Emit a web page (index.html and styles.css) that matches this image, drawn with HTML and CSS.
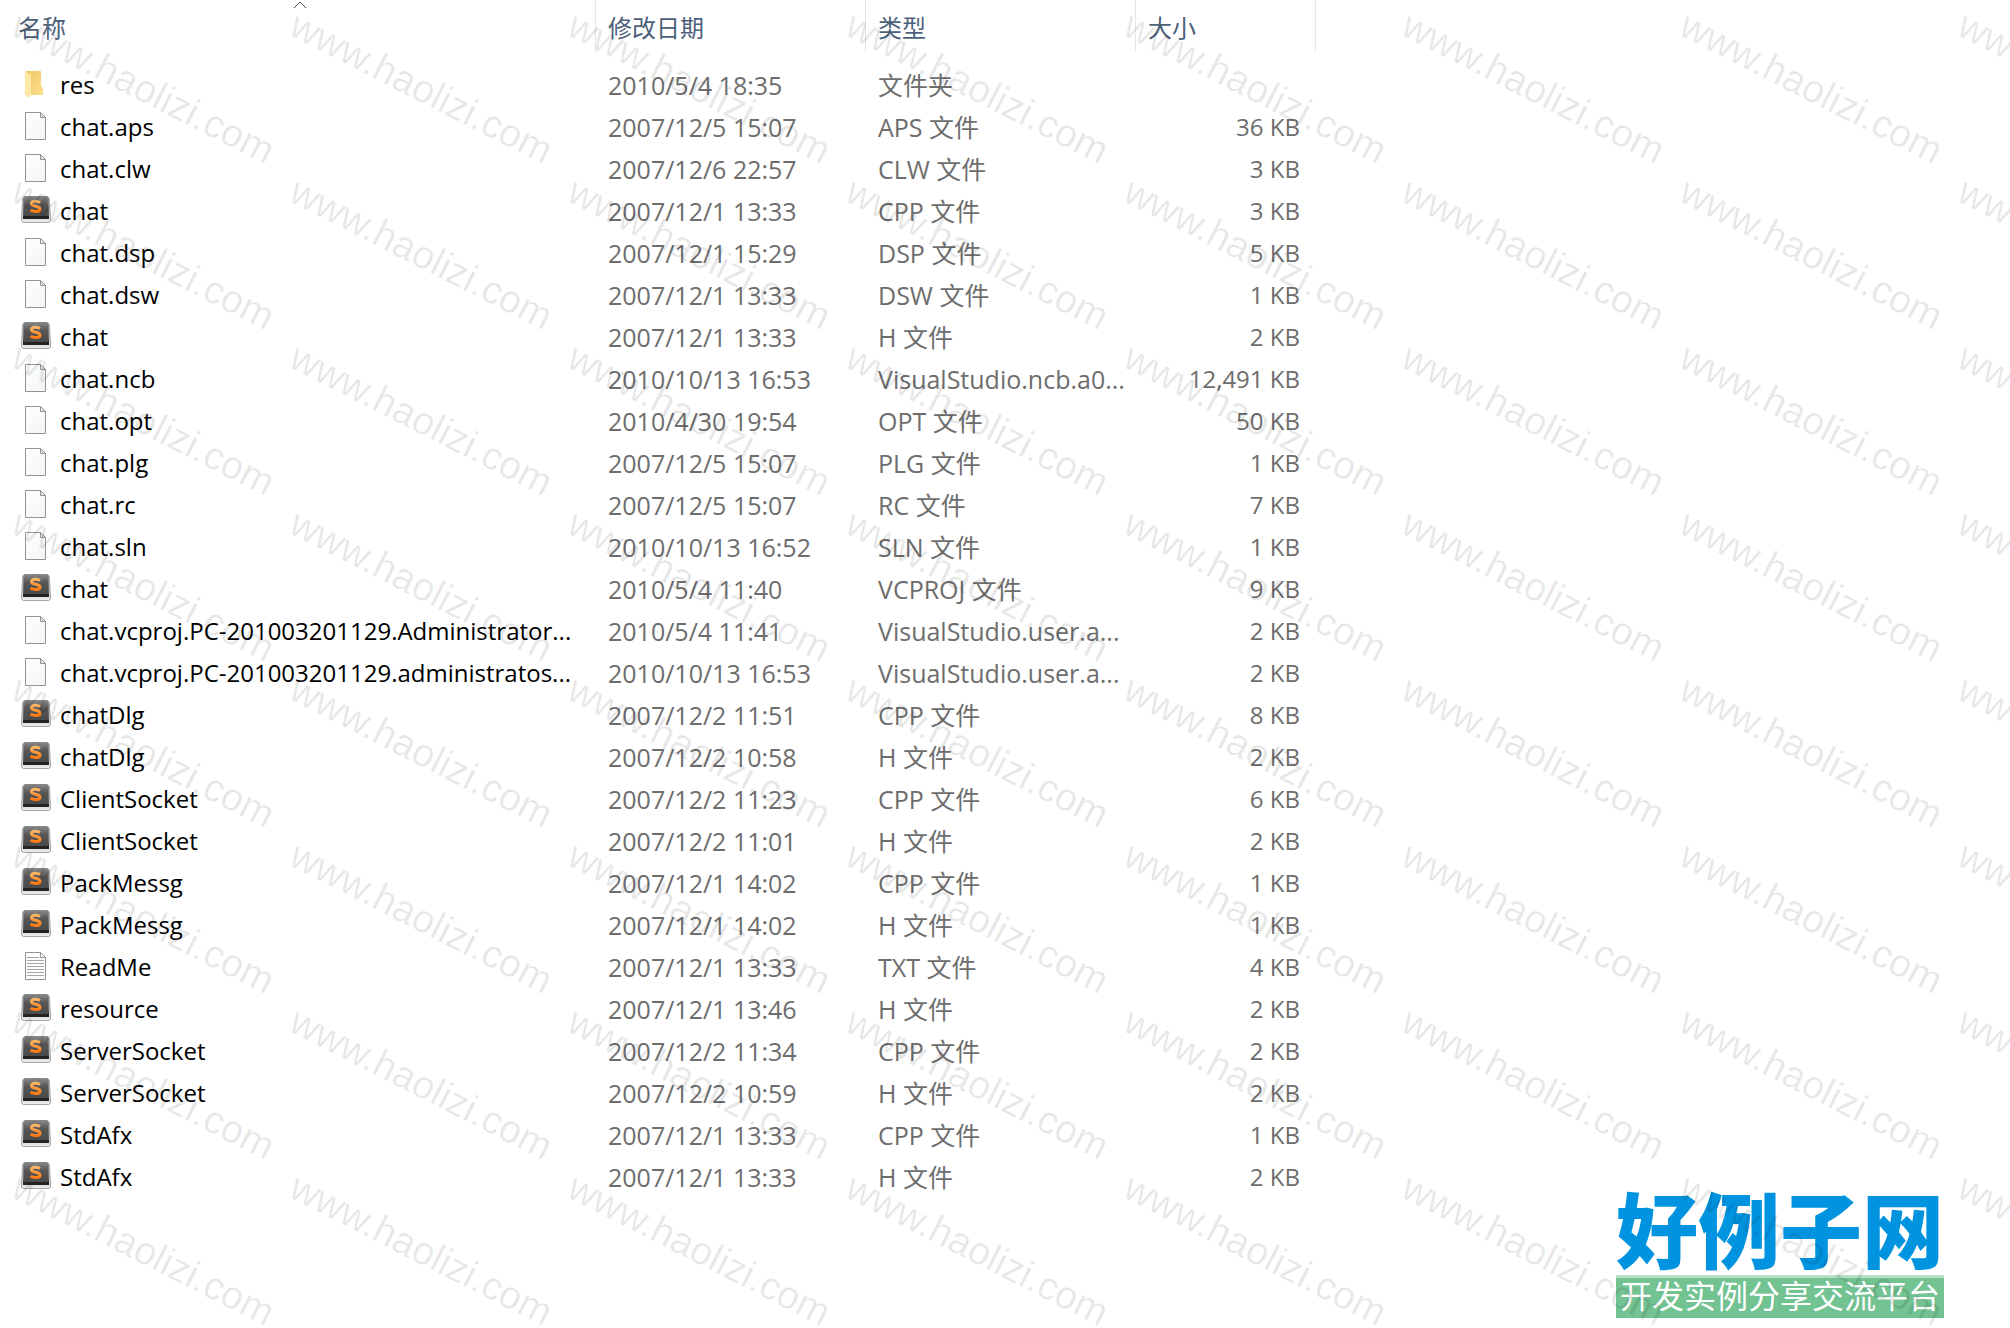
FILE: index.html
```
<!DOCTYPE html>
<html lang="zh-CN">
<head>
    <meta charset="UTF-8">
    <meta name="viewport" content="width=device-width, initial-scale=1.0">
    <title>chat</title>
    <link rel="stylesheet" href="styles.css">
</head>
<body>
    <svg class="defs" aria-hidden="true">
        <defs>
            <linearGradient id="folderBack" x1="0" y1="0" x2="1" y2="1">
                <stop offset="0" stop-color="#f0c965"/>
                <stop offset="1" stop-color="#fddf8c"/>
            </linearGradient>
            <linearGradient id="paper" x1="0" y1="0" x2="1" y2="1">
                <stop offset="0" stop-color="#ffffff"/>
                <stop offset="1" stop-color="#f1f4f6"/>
            </linearGradient>
            <linearGradient id="keyTop" x1="0" y1="0" x2="0" y2="1">
                <stop offset="0" stop-color="#8a8a8a"/>
                <stop offset="0.45" stop-color="#555555"/>
                <stop offset="1" stop-color="#4a4a4a"/>
            </linearGradient>
            <linearGradient id="keySide" x1="0" y1="0" x2="0" y2="1">
                <stop offset="0" stop-color="#888888"/>
                <stop offset="1" stop-color="#eeeeee"/>
            </linearGradient>
            <linearGradient id="keyS" x1="0" y1="0" x2="0" y2="1">
                <stop offset="0" stop-color="#ffb765"/>
                <stop offset="1" stop-color="#ff7a12"/>
            </linearGradient>
        </defs>
        <symbol id="folder" viewBox="0 0 32 32">
            <path d="M6 3H21V18L23 20V27H6Z" fill="url(#folderBack)"/>
            <path d="M5 3L11 7V25L10 30L5 27Z" fill="#fde8a6"/>
        </symbol>
        <symbol id="file" viewBox="0 0 32 32">
            <path d="M5.500 2.500H20.500L25.500 7.500V29.500H5.500Z" fill="url(#paper)" stroke="#949494"/>
            <path d="M20.500 2.500V7.500H25.500Z" fill="#e4e4e4" stroke="#949494"/>
        </symbol>
        <symbol id="text" viewBox="0 0 32 32">
            <path d="M5.500 2.500H20.500L25.500 7.500V29.500H5.500Z" fill="#fcfcfc" stroke="#949494"/>
            <path d="M20.500 2.500V7.500H25.500Z" fill="#ffffff" stroke="#949494"/>
            <path d="M7 7.500H19M7 10.500H24M7 13.500H24M7 16.500H24M7 19.500H24M7 22.500H24M7 25.500H24" stroke="#a6a6a6"/>
        </symbol>
        <symbol id="sublime" viewBox="0 0 32 32">
            <path d="M5 2.500H27Q29 2.500 29.300 5L30.500 24V26Q30.500 28.500 28 28.500H4Q1.500 28.500 1.500 26V24L2.700 5Q3 2.500 5 2.500Z" fill="url(#keySide)" stroke="#a4a4a4"/>
            <path d="M6 2H26Q28 2 28.200 4L29 22H3L3.800 4Q4 2 6 2Z" fill="url(#keyTop)"/>
            <path d="M3 22H29V25H3Z" fill="#242424"/>
            <path d="M20 8.500C17 6.500 11.500 6.700 11.500 9.700C11.500 13 20 11.300 20 14.900C20 18.200 14 18.200 10.500 16.300" fill="none" stroke="url(#keyS)" stroke-width="3"/>
        </symbol>
    </svg>

    <table class="files">
        <colgroup>
            <col class="col-name">
            <col class="col-date">
            <col class="col-type">
            <col class="col-size">
        </colgroup>
        <thead>
            <tr>
                <th>名称<svg class="sort" viewBox="0 0 14 8"><path d="M1 7L7 1L13 7" fill="none" stroke="#444444"/></svg></th>
                <th>修改日期</th>
                <th>类型</th>
                <th>大小</th>
            </tr>
        </thead>
        <tbody>
            <tr><td><svg class="icon"><use href="#folder"/></svg>res</td><td>2010/5/4 18:35</td><td>文件夹</td><td></td></tr>
            <tr><td><svg class="icon"><use href="#file"/></svg>chat.aps</td><td>2007/12/5 15:07</td><td>APS 文件</td><td>36 KB</td></tr>
            <tr><td><svg class="icon"><use href="#file"/></svg>chat.clw</td><td>2007/12/6 22:57</td><td>CLW 文件</td><td>3 KB</td></tr>
            <tr><td><svg class="icon"><use href="#sublime"/></svg>chat</td><td>2007/12/1 13:33</td><td>CPP 文件</td><td>3 KB</td></tr>
            <tr><td><svg class="icon"><use href="#file"/></svg>chat.dsp</td><td>2007/12/1 15:29</td><td>DSP 文件</td><td>5 KB</td></tr>
            <tr><td><svg class="icon"><use href="#file"/></svg>chat.dsw</td><td>2007/12/1 13:33</td><td>DSW 文件</td><td>1 KB</td></tr>
            <tr><td><svg class="icon"><use href="#sublime"/></svg>chat</td><td>2007/12/1 13:33</td><td>H 文件</td><td>2 KB</td></tr>
            <tr><td><svg class="icon"><use href="#file"/></svg>chat.ncb</td><td>2010/10/13 16:53</td><td>VisualStudio.ncb.a0...</td><td>12,491 KB</td></tr>
            <tr><td><svg class="icon"><use href="#file"/></svg>chat.opt</td><td>2010/4/30 19:54</td><td>OPT 文件</td><td>50 KB</td></tr>
            <tr><td><svg class="icon"><use href="#file"/></svg>chat.plg</td><td>2007/12/5 15:07</td><td>PLG 文件</td><td>1 KB</td></tr>
            <tr><td><svg class="icon"><use href="#file"/></svg>chat.rc</td><td>2007/12/5 15:07</td><td>RC 文件</td><td>7 KB</td></tr>
            <tr><td><svg class="icon"><use href="#file"/></svg>chat.sln</td><td>2010/10/13 16:52</td><td>SLN 文件</td><td>1 KB</td></tr>
            <tr><td><svg class="icon"><use href="#sublime"/></svg>chat</td><td>2010/5/4 11:40</td><td>VCPROJ 文件</td><td>9 KB</td></tr>
            <tr><td><svg class="icon"><use href="#file"/></svg>chat.vcproj.PC-201003201129.Administrator...</td><td>2010/5/4 11:41</td><td>VisualStudio.user.a...</td><td>2 KB</td></tr>
            <tr><td><svg class="icon"><use href="#file"/></svg>chat.vcproj.PC-201003201129.administratos...</td><td>2010/10/13 16:53</td><td>VisualStudio.user.a...</td><td>2 KB</td></tr>
            <tr><td><svg class="icon"><use href="#sublime"/></svg>chatDlg</td><td>2007/12/2 11:51</td><td>CPP 文件</td><td>8 KB</td></tr>
            <tr><td><svg class="icon"><use href="#sublime"/></svg>chatDlg</td><td>2007/12/2 10:58</td><td>H 文件</td><td>2 KB</td></tr>
            <tr><td><svg class="icon"><use href="#sublime"/></svg>ClientSocket</td><td>2007/12/2 11:23</td><td>CPP 文件</td><td>6 KB</td></tr>
            <tr><td><svg class="icon"><use href="#sublime"/></svg>ClientSocket</td><td>2007/12/2 11:01</td><td>H 文件</td><td>2 KB</td></tr>
            <tr><td><svg class="icon"><use href="#sublime"/></svg>PackMessg</td><td>2007/12/1 14:02</td><td>CPP 文件</td><td>1 KB</td></tr>
            <tr><td><svg class="icon"><use href="#sublime"/></svg>PackMessg</td><td>2007/12/1 14:02</td><td>H 文件</td><td>1 KB</td></tr>
            <tr><td><svg class="icon"><use href="#text"/></svg>ReadMe</td><td>2007/12/1 13:33</td><td>TXT 文件</td><td>4 KB</td></tr>
            <tr><td><svg class="icon"><use href="#sublime"/></svg>resource</td><td>2007/12/1 13:46</td><td>H 文件</td><td>2 KB</td></tr>
            <tr><td><svg class="icon"><use href="#sublime"/></svg>ServerSocket</td><td>2007/12/2 11:34</td><td>CPP 文件</td><td>2 KB</td></tr>
            <tr><td><svg class="icon"><use href="#sublime"/></svg>ServerSocket</td><td>2007/12/2 10:59</td><td>H 文件</td><td>2 KB</td></tr>
            <tr><td><svg class="icon"><use href="#sublime"/></svg>StdAfx</td><td>2007/12/1 13:33</td><td>CPP 文件</td><td>1 KB</td></tr>
            <tr><td><svg class="icon"><use href="#sublime"/></svg>StdAfx</td><td>2007/12/1 13:33</td><td>H 文件</td><td>2 KB</td></tr>
        </tbody>
    </table>

    <div class="brand">
        <div class="brand-name">好例子网</div>
        <div class="brand-line">开发实例分享交流平台</div>
    </div>

    <div class="watermark" id="watermark"></div>

    <script>
        // fill the window with watermark tiles
        const watermark = document.getElementById("watermark");
        const cols = Math.ceil(window.innerWidth / 278);
        const rows = Math.ceil(window.innerHeight / 166);
        watermark.style.gridTemplateColumns = `repeat(${cols}, 278px)`;
        for (let i = 0; i < cols * rows; i++) {
            const mark = document.createElement("span");
            mark.innerText = "www.haolizi.com";
            watermark.appendChild(mark);
        }
    </script>
</body>
</html>
```
FILE: styles.css
```
body {
    margin: 0;
    min-height: 100vh;
    position: relative;
    overflow: hidden;
    background-color: white;
    color: #6d6d6d;
    font-family: "Open Sans", "Noto Sans CJK SC", sans-serif;
    font-size: 24px;
}
.defs {
    position: absolute;
    width: 0;
    height: 0;
}
.files {
    width: 1316px;
    table-layout: fixed;
    border-collapse: separate;
    border-spacing: 0;
}
.col-name {
    width: 596px;
}
.col-date,
.col-type {
    width: 270px;
}
.col-size {
    width: 180px;
}
th {
    position: relative;
    height: 52px;
    padding: 0 0 0 12px;
    border-right: 1px solid #e5e5e5;
    box-sizing: border-box;
    color: #4c607a;
    font-weight: normal;
    text-align: left;
}
th:first-child {
    padding-left: 18px;
}
.sort {
    position: absolute;
    top: 1px;
    left: 50%;
    width: 14px;
    height: 8px;
    margin-left: -5px;
}
tbody::before {
    content: "";
    display: block;
    height: 12px;
}
td {
    height: 42px;
    padding: 0 0 0 12px;
    font-size: 25px;
    line-height: 42px;
    white-space: nowrap;
}
td:first-child {
    padding-left: 20px;
    color: black;
    font-size: 24px;
}
td:last-child {
    padding-right: 16px;
    font-size: 24px;
    text-align: right;
}
.icon {
    width: 32px;
    height: 32px;
    margin-right: 8px;
    vertical-align: -6px;
}
.brand {
    position: absolute;
    right: 66px;
    bottom: 10px;
    width: 328px;
}
.brand-name {
    color: #0093e0;
    font-family: "Noto Sans CJK SC", sans-serif;
    font-size: 82px;
    font-weight: 900;
    line-height: 96px;
}
.brand-line {
    height: 40px;
    border-top: 3px solid #b5dfc6;
    background-color: #72c292;
    color: white;
    font-size: 32px;
    line-height: 36px;
    text-align: center;
}
.watermark {
    position: absolute;
    inset: 0;
    display: grid;
    grid-auto-rows: 166px;
    overflow: hidden;
    pointer-events: none;
    color: rgba(0, 0, 0, 0.09);
    font-family: "Liberation Sans", sans-serif;
    font-size: 39px;
    line-height: 42px;
}
.watermark span {
    padding-left: 9px;
    transform: rotate(27deg);
    transform-origin: 9px 34px;
    white-space: nowrap;
}
```
